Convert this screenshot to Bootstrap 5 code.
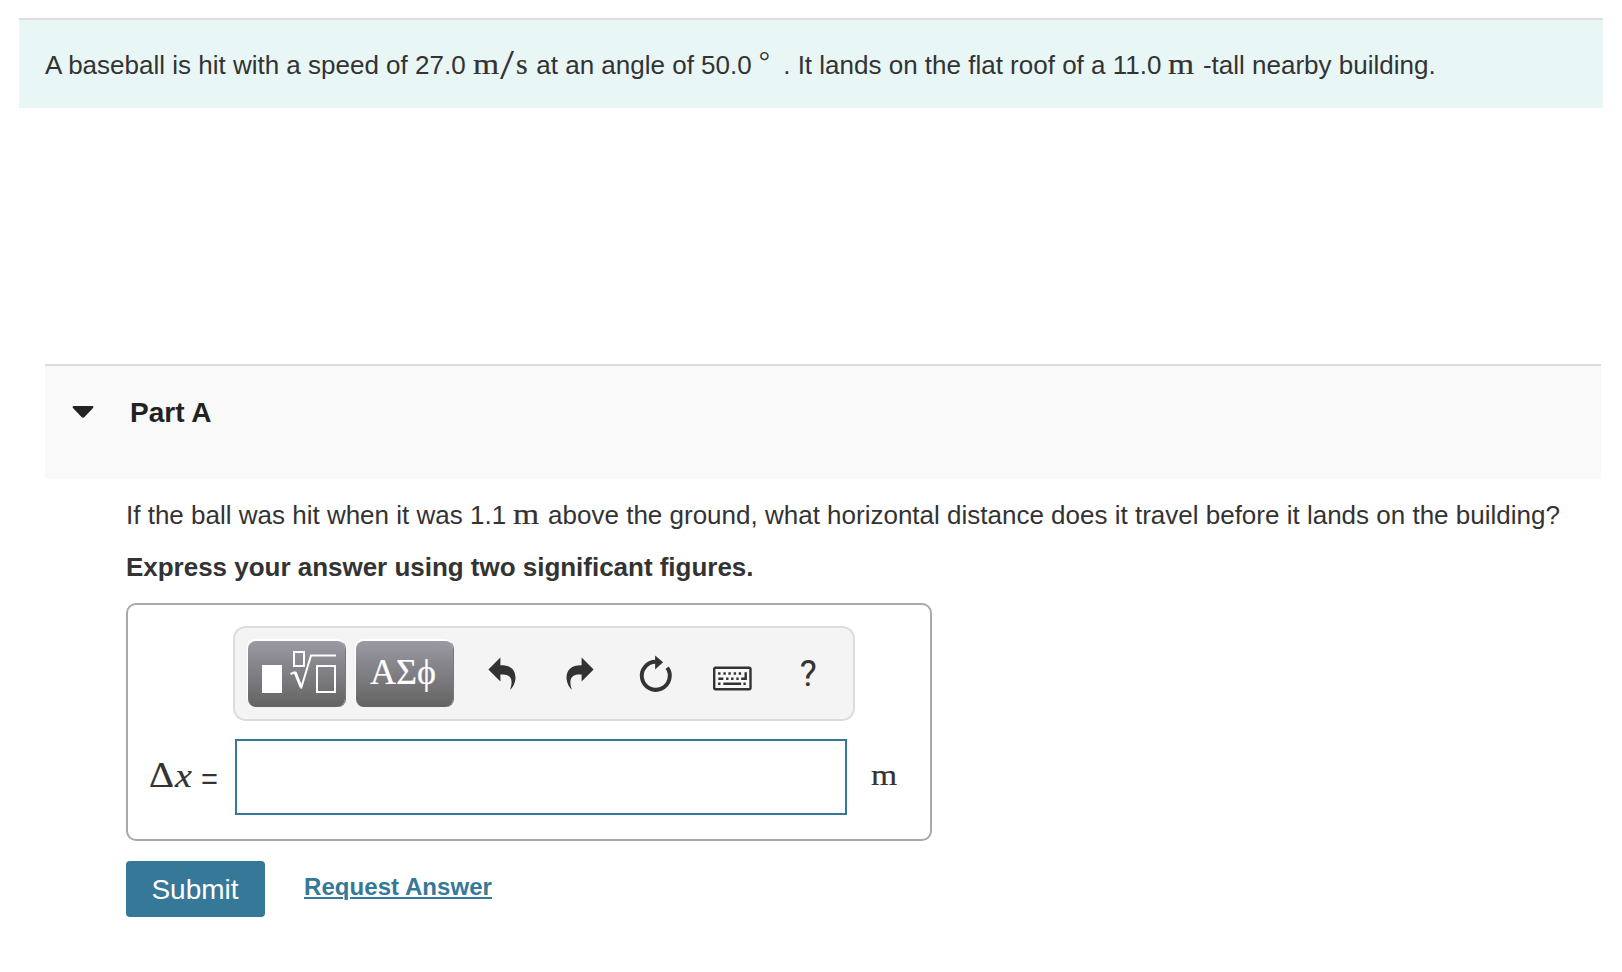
<!DOCTYPE html>
<html lang="en">
<head>
<meta charset="utf-8">
<meta name="viewport" content="width=device-width, initial-scale=1">
<title>Part A</title>
<link rel="stylesheet" href="https://cdn.jsdelivr.net/npm/bootstrap@5.3.0/dist/css/bootstrap.min.css">
<style>
body{font-family:"Liberation Sans",Arial,sans-serif;font-size:26px;line-height:30px;color:#333;background:#fff;white-space:nowrap;overflow:hidden}
.problem-intro{margin:18px 19px 0;height:90px;padding:30px 26px 0;border-top:2px solid #dcdedd;background:#e8f6f6}
.part-head{margin:256px 21px 0 45px;height:115px;padding:0 27px;border-top:2px solid #dcdcdc;background:#f9f9f9}
.part-title{font-size:28px;line-height:32px;color:#222;margin:31px 0 0 36px}
.caret-icon{width:22px;height:12px;margin-top:40px}
.part-body{margin-left:126px}
.question{padding-top:21px}
.hint{padding-top:22px;letter-spacing:-.02px}
.math{font-family:"Liberation Serif",serif;font-size:30px;line-height:0;-webkit-text-stroke:.2px #333}
.unit-m{display:inline-block;width:26.500px;transform:scaleX(1.120);transform-origin:left}
.slash{display:inline-block;width:16px;font-size:42px;-webkit-text-stroke:0;transform:translateY(5px) scaleX(1.200);transform-origin:left}
.degree{display:inline-block;width:15px;font-size:28px;-webkit-text-stroke:0;transform:translateY(-4px)}
.delta{display:inline-block;width:26px;font-size:36px;transform:translateY(1px) scaleX(1.080);transform-origin:left}
.var-x{display:inline-block;width:17px;font-size:34px;transform:translateY(1px) scaleX(1.120);transform-origin:left}
.answer-box{width:806px;height:238px;margin-top:21px;border:2px solid #a9a9a9;border-radius:10px}
.tools{width:622px;height:95px;margin:21px 0 0 105px;padding:13px 0 0 13px;border:2px solid #dcdcdc;border-radius:13px;background:#f4f4f4}
.key{width:97px;height:66px;border-radius:8px;background:linear-gradient(#9b99a3,#636363);box-shadow:-1px -2px 0 #fff,1px 0 0 #777;margin-right:11px;color:#fff}
.greek{font:36px/58px "Liberation Serif",serif;-webkit-text-stroke:.2px #fff;padding:0 3px 5px 0}
.tool{width:76.500px;height:66px;padding:0}
.tool svg{width:40px;height:40px;margin-top:-1px}
.help-mark{font:400 36px/66px Roboto,sans-serif;color:#333}
.answer-label{width:107px;padding-left:21px}
.equals{display:inline-block;font-size:29px;margin-left:9px;line-height:0;transform:translateY(3px)}
.answer-input{width:612px;height:76px;border:2px solid #357898;border-radius:0}
.btn-submit{width:139px;height:56px;border-radius:4px;background:#357898;color:#fff;font-size:28px;line-height:57px;padding:0 1px 0 0}
.request{font-size:24px;letter-spacing:.06px;color:#357898;text-decoration-thickness:1.500px;text-underline-offset:2px}
.request:hover,.request:focus{color:#357898}
</style>
</head>
<body>
<section class="problem-intro"><span>A baseball is hit with a speed of 27.0</span><span class="math" style="margin-left:7px"><span class="unit-m">m</span><span class="slash" style="margin-left:1px">/</span><span>s</span></span><span style="margin-left:8.500px">at an angle of 50.0</span><span class="math" style="margin-left:7px"><span class="degree">°</span></span><span style="margin-left:9.500px">. It lands on the flat roof of a 11.0</span><span class="math" style="margin-left:7px"><span class="unit-m">m</span></span><span style="margin-left:8px">-tall nearby building.</span></section>
<section>
  <header class="part-head d-flex align-items-start">
    <svg class="caret-icon" viewBox="0 0 22 12"><path d="M1.500 0H20.500Q22 .8 21 2L12.500 11Q11 12.400 9.500 11L1 2Q0 .8 1.500 0Z" fill="#222"/></svg>
    <h2 class="part-title fw-bold">Part A</h2>
  </header>
  <div class="part-body">
    <p class="question mb-0"><span>If the ball was hit when it was 1.1</span><span class="math" style="margin-left:7px"><span class="unit-m">m</span></span><span style="margin-left:8.500px">above the ground, what horizontal distance does it travel before it lands on the building?</span></p>
    <p class="hint fw-bold mb-0">Express your answer using two significant figures.</p>
    <div class="answer-box">
      <div class="tools d-flex">
        <button class="key btn p-0 border-0" aria-label="Templates"><svg class="d-block" width="97" height="66" fill="none" stroke="#fff" stroke-width="2"><path d="M14 24h20v28H14z" fill="#fff" stroke="none"/><path d="M46 11h10v14H46zM69 25h18v26H69z"/><path d="M42.500 33l5-2"/><path d="M47 31l6 15" stroke-width="3"/><path d="M53 47.500l10-33h25"/></svg></button>
        <button class="key btn border-0 greek">ΑΣϕ</button>
        <button class="tool btn border-0" aria-label="Undo"><svg viewBox="0 0 40 40"><path fill="#333" d="M6.400 15.500 18.400 3.500V11.200C28 11 33.600 15 33.500 24.500 33 30 30.500 33.500 28 36 31 27 30.500 19.500 18.400 20.500V27.500Z"/></svg></button>
        <button class="tool btn border-0" aria-label="Redo"><svg viewBox="0 0 40 40"><path fill="#333" transform="matrix(-1 0 0 1 41 0)" d="M6.400 15.500 18.400 3.500V11.200C28 11 33.600 15 33.500 24.500 33 30 30.500 33.500 28 36 31 27 30.500 19.500 18.400 20.500V27.500Z"/></svg></button>
        <button class="tool btn border-0" aria-label="Reset"><svg viewBox="0 0 40 40"><path d="M32.200 13.700A14 14 0 1 1 20.800 7.800" fill="none" stroke="#333" stroke-width="4"/><path d="M20.100 1.500 28.100 8.200 20.100 15.500Z" fill="#333"/></svg></button>
        <button class="tool btn border-0" aria-label="Keyboard"><svg viewBox="0 0 40 40"><rect x="2.200" y="13.800" width="36.300" height="21.400" rx="1.500" fill="#f8f8f8" stroke="#333" stroke-width="2.400"/><path stroke="#333" stroke-width="2.400" fill="none" d="M6.100 19.500h2.400m2.900 0h2.400m2.600 0h2.400m2.900 0h2.400m2.600 0h2.400M6.300 24.700h5m2.800 0h2.400m2.600 0h2.400m2.800 0h2.400m2.500 0h4.500V18.300M6.100 29.800h2.400m2.800 0h17.900m2.200 0h2.400"/></svg></button>
        <button class="tool btn border-0 help-mark">?</button>
      </div>
      <div class="d-flex align-items-center" style="margin-top:18px">
        <label class="answer-label" for="ans"><span class="math"><span class="delta">Δ</span><i class="var-x">x</i></span><span class="equals">=</span></label>
        <input id="ans" class="answer-input form-control p-0 shadow-none">
        <span class="math" style="margin:0 0 4px 24px"><span class="unit-m">m</span></span>
      </div>
    </div>
    <div class="d-flex" style="margin-top:20px">
      <button class="btn btn-submit border-0">Submit</button>
      <a class="request fw-bold" href="#" style="margin:11px 0 0 39px">Request Answer</a>
    </div>
  </div>
</section>
<script src="https://cdn.jsdelivr.net/npm/bootstrap@5.3.0/dist/js/bootstrap.bundle.min.js"></script>
</body>
</html>
